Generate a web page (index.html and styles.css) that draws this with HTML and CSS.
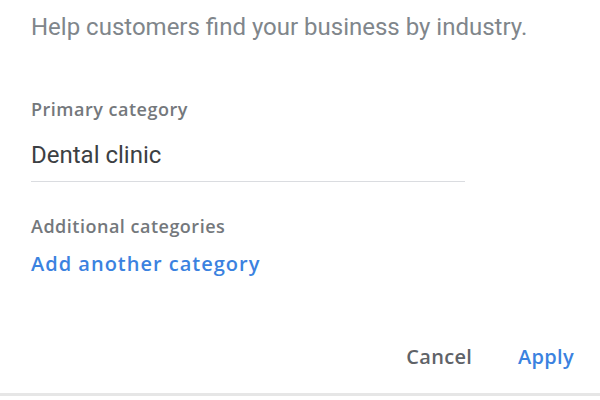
FILE: index.html
```html
<!DOCTYPE html>
<html lang="en">
<head>
    <meta charset="UTF-8">
    <meta name="viewport" content="width=device-width, initial-scale=1.0">
    <title>Business category</title>
    <link rel="stylesheet" href="styles.css">
</head>
<body>
    <div class="dialog">
        <p class="intro">Help customers find your business by industry.</p>

        <div class="field">
            <div class="field-label">Primary category</div>
            <div class="field-value">Dental clinic</div>
        </div>

        <div class="field extra">
            <div class="field-label">Additional categories</div>
            <a class="add-link" href="#">Add another category</a>
        </div>

        <div class="actions">
            <button class="btn btn-cancel">Cancel</button>
            <button class="btn btn-apply">Apply</button>
        </div>
    </div>
</body>
</html>
```

FILE: styles.css
```css
body {
    margin: 0;
    font-family: Roboto, 'Liberation Sans', sans-serif;
    background: #fff;
}
.dialog {
    height: 396px;
    box-sizing: border-box;
    padding: 13px 26px 0 31px;
    border-bottom: 3px solid #e6e6e6;
    display: flex;
    flex-direction: column;
}
.intro {
    margin: 0;
    font-size: 24px;
    line-height: 28px;
    color: #80868b;
}
.field {
    margin-top: 56px;
    display: flex;
    flex-direction: column;
}
.field-label {
    font-family: 'Open Sans', Roboto, sans-serif;
    font-size: 18px;
    font-weight: 600;
    line-height: 24px;
    letter-spacing: 0.5px;
    color: #74787c;
}
.field-value {
    width: 434px;
    margin-top: 20px;
    padding-bottom: 12px;
    border-bottom: 1px solid #dadce0;
    font-size: 24px;
    line-height: 28px;
    color: #3c4043;
}
.extra {
    margin-top: 32px;
}
.add-link {
    margin-top: 14px;
    font-family: 'Open Sans', Roboto, sans-serif;
    font-size: 20px;
    font-weight: 600;
    line-height: 24px;
    letter-spacing: 1px;
    color: #3b82e0;
    text-decoration: none;
}
.actions {
    margin-top: auto;
    margin-bottom: 24px;
    display: flex;
    justify-content: flex-end;
    gap: 46px;
}
.btn {
    padding: 0;
    border: none;
    background: none;
    font-family: 'Open Sans', Roboto, sans-serif;
    font-size: 20px;
    font-weight: 600;
    line-height: 24px;
    letter-spacing: 0.3px;
    cursor: pointer;
}
.btn-cancel {
    color: #5f6368;
}
.btn-apply {
    color: #3b82e0;
}
```
